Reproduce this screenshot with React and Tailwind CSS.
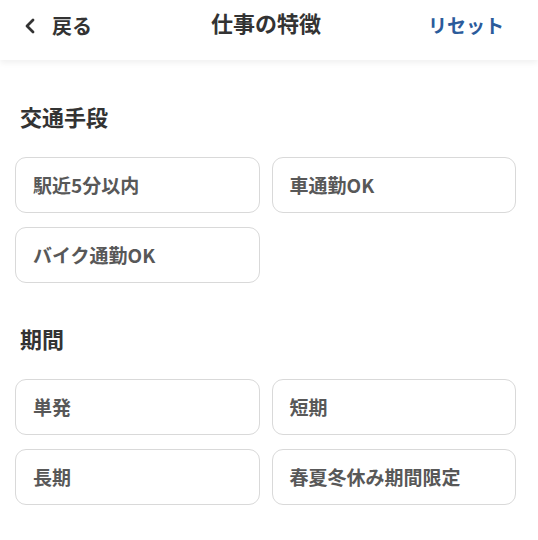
const transport = ['駅近5分以内', '車通勤OK', 'バイク通勤OK'];
const period = ['単発', '短期', '長期', '春夏冬休み期間限定'];

const font = { fontFamily: '"Noto Sans CJK JP", "Noto Sans", sans-serif' };

const Option = ({ label }) => (
  <button
    type="button"
    className="flex h-14 items-center rounded-[11px] border border-[#d9d9d9] bg-white pl-[17px] text-left text-[19px] font-bold text-[#585858]"
  >
    {label}
  </button>
);

const Section = ({ title, items, className }) => (
  <section className={className}>
    <h2 className="pl-[5px] text-[22px] leading-7 font-bold text-[#333]">
      {title}
    </h2>
    <div className="mt-[27px] grid grid-cols-2 gap-x-3 gap-y-[14px]">
      {items.map((item) => (
        <Option key={item} label={item} />
      ))}
    </div>
  </section>
);

export default function App() {
  return (
    <div className="min-h-[540px] w-[538px] bg-white" style={font}>
      <header className="relative flex h-[60px] items-start justify-between bg-white pt-[11px] pr-[34px] pl-[24px] shadow-[0_3px_6px_rgba(0,0,0,0.06)]">
        <button type="button" className="flex items-center gap-[16px] text-[20px] font-bold text-[#333]">
          <svg width="12" height="16" viewBox="0 0 12 16" fill="none">
            <path d="M9 2 L3 8 L9 14" stroke="#333" strokeWidth="2.8" strokeLinecap="round" strokeLinejoin="round" />
          </svg>
          戻る
        </button>
        <h1 className="absolute top-[7px] left-[calc(50%-3px)] -translate-x-1/2 text-[22px] leading-[30px] font-bold text-[#333]">
          仕事の特徴
        </h1>
        <button type="button" className="text-[19px] font-bold text-[#2b5b9b]">
          リセット
        </button>
      </header>

      <main className="pr-[22px] pb-8 pl-[15px]">
        <Section className="mt-[42px]" title="交通手段" items={transport} />
        <Section className="mt-[41px]" title="期間" items={period} />
      </main>
    </div>
  );
}
